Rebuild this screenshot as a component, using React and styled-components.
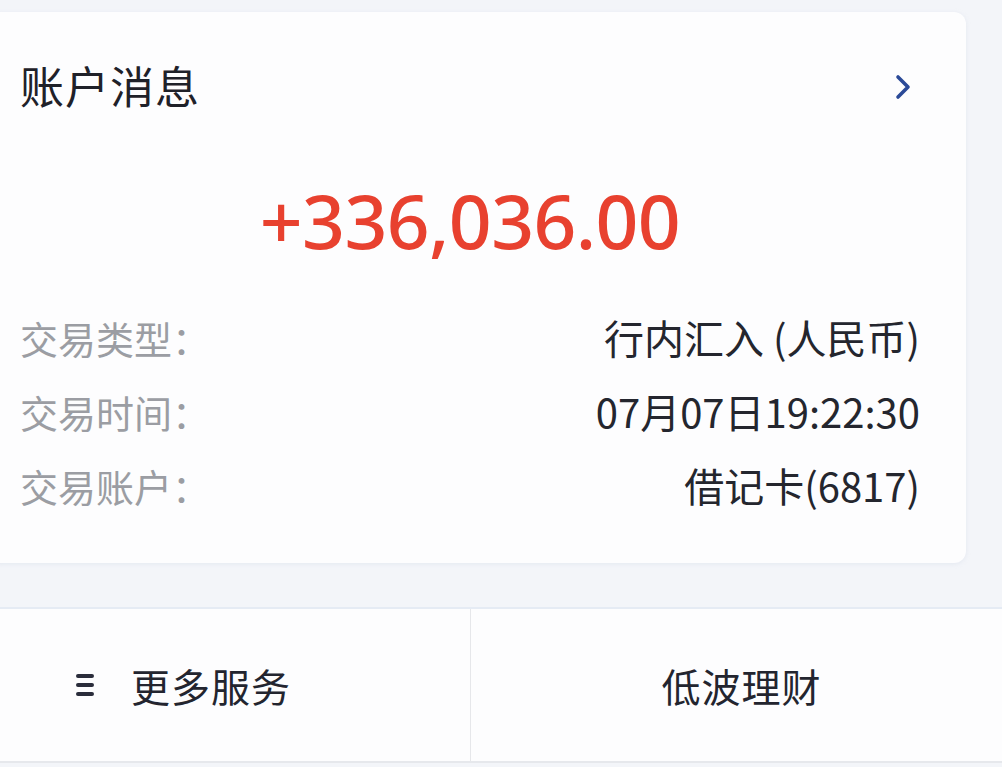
import React from "react";
import styled, { createGlobalStyle } from "styled-components";

const Global = createGlobalStyle`
  html, body { margin: 0; padding: 0; }
  body {
    background: #f3f5f9;
    font-family: "Noto Sans", "Noto Sans CJK SC", sans-serif;
    width: 1002px;
    height: 767px;
    overflow: hidden;
  }
`;

const Page = styled.div`
  display: flex;
  flex-direction: column;
  height: 767px;
`;

const Card = styled.section`
  margin: 12px 36px 0 -12px;
  background: #fdfdfe;
  border-radius: 12px;
  box-shadow: 0 1px 4px rgba(200, 210, 225, 0.35);
  padding: 0 46px 41px 32px;
  display: flex;
  flex-direction: column;
`;

const Header = styled.div`
  height: 146px;
  display: flex;
  align-items: center;
  justify-content: space-between;
`;

const Title = styled.h2`
  margin: 0;
  font-family: "Noto Sans CJK SC", sans-serif;
  font-weight: 400;
  font-size: 44px;
  color: #1f2129;
  letter-spacing: 1px;
`;

const Chevron = styled.svg`
  width: 18px;
  height: 26px;
  margin-right: 8px;
  margin-top: 4px;
`;

const Amount = styled.div`
  margin-top: 14px;
  text-align: center;
  font-family: "Noto Sans", sans-serif;
  font-weight: 500;
  font-size: 75px;
  line-height: 96px;
  letter-spacing: -0.6px;
  color: #e8412f;
`;

const Rows = styled.div`
  margin-top: 32px;
  display: flex;
  flex-direction: column;
`;

const Row = styled.div`
  height: 74px;
  display: flex;
  align-items: center;
  justify-content: space-between;
`;

const Label = styled.span`
  font-family: "Noto Sans CJK SC", sans-serif;
  font-size: 38px;
  color: #9b9da3;
`;

const Value = styled.span`
  font-family: "Noto Sans CJK SC", sans-serif;
  font-size: 40px;
  color: #24262e;
`;

const Bar = styled.nav`
  margin-top: 44px;
  height: 152px;
  background: #fdfdfe;
  border-top: 2px solid #e5ebf4;
  border-bottom: 2px solid #e6e8ec;
  display: grid;
  grid-template-columns: 470px 1fr;
`;

const BarItem = styled.div`
  display: flex;
  align-items: center;
  justify-content: ${(p) => (p.$center ? "center" : "flex-start")};
  padding-left: ${(p) => (p.$center ? "10px" : "75px")};
  border-left: ${(p) => (p.$center ? "1px solid #e6e7ea" : "none")};
  gap: 36px;
  font-family: "Noto Sans CJK SC", sans-serif;
  font-size: 39px;
  color: #23252f;
  letter-spacing: 1px;
`;

const Menu = styled.svg`
  width: 20px;
  height: 24px;
`;

export default function App() {
  const rows = [
    ["交易类型：", "行内汇入 (人民币)"],
    ["交易时间：", "07月07日19:22:30"],
    ["交易账户：", "借记卡(6817)"],
  ];
  return (
    <Page>
      <Global />
      <Card>
        <Header>
          <Title>账户消息</Title>
          <Chevron viewBox="0 0 18 26">
            <path d="M4 3 L14 13 L4 23" fill="none" stroke="#2b4a98" strokeWidth="3.6" strokeLinecap="round" strokeLinejoin="round" />
          </Chevron>
        </Header>
        <Amount>+336,036.00</Amount>
        <Rows>
          {rows.map(([l, v]) => (
            <Row key={l}>
              <Label>{l}</Label>
              <Value>{v}</Value>
            </Row>
          ))}
        </Rows>
      </Card>
      <Bar>
        <BarItem>
          <Menu viewBox="0 0 20 24">
            <path d="M3 3 H17 M3 12 H17 M3 21 H17" stroke="#2a2d3b" strokeWidth="4" strokeLinecap="round" />
          </Menu>
          <span>更多服务</span>
        </BarItem>
        <BarItem $center>低波理财</BarItem>
      </Bar>
    </Page>
  );
}
